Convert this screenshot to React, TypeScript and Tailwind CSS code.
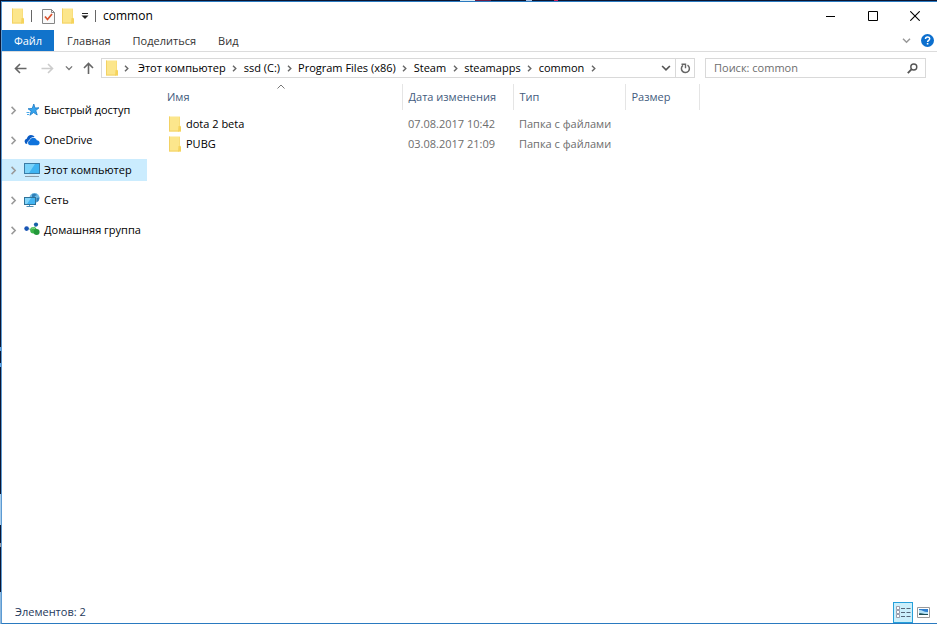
import React from "react";

const crumbs = ["Этот компьютер", "ssd (C:)", "Program Files (x86)", "Steam", "steamapps", "common"];

const files = [
  { name: "dota 2 beta", date: "07.08.2017 10:42", type: "Папка с файлами" },
  { name: "PUBG", date: "03.08.2017 21:09", type: "Папка с файлами" },
];

function Folder() {
  return (
    <svg width="14" height="16" viewBox="0 0 14 16" className="shrink-0" aria-hidden="true">
      <path d="M1 .5h11v9l1 1v5H1z" fill="#fce68c" />
      <path d="M1 .5h1v15H1zM1 14.500h10v1H1z" fill="#f3d264" />
      <path d="M10.500 10H12l1 1v4.500h-3z" fill="#f5d35c" />
      <path d="M11.200 1v9h.8V1z" fill="#f8dc77" />
    </svg>
  );
}

function Chevron({ size = 7, color = "#666", width = 1.4 }: { size?: number; color?: string; width?: number }) {
  return (
    <svg width={size} height={size} viewBox="0 0 7 7" className="shrink-0" aria-hidden="true">
      <path d="M2 .7 4.800 3.500 2 6.300" fill="none" stroke={color} strokeWidth={width} />
    </svg>
  );
}

function Down({ color, size = 9 }: { color: string; size?: number }) {
  return (
    <svg width={size} height={size} viewBox="0 0 9 9" aria-hidden="true">
      <path d="m1 2.700 3.500 3.500L8 2.700" fill="none" stroke={color} strokeWidth="1.500" />
    </svg>
  );
}

function StarIcon() {
  return (
    <svg width="16" height="16" viewBox="0 0 16 16" aria-hidden="true">
      <path d="m9.800 2 1.200 4 4-.2-3.200 2.700 1.400 4.500-3.600-2.500-3.700 2.800 1.300-4.300-3.200-2.200 4.200-.4z" fill="#36a4ee" stroke="#1979c4" strokeWidth=".8" />
      <path d="M2.500 10.500h3M3 12.500h2" stroke="#4aa8e8" />
    </svg>
  );
}

function CloudIcon() {
  return (
    <svg width="16" height="16" viewBox="0 0 16 16" aria-hidden="true">
      <path d="M3.200 12A2.600 2.600 0 0 1 .6 9.500c0-1.400.9-2.400 2.200-2.700C3.300 4.500 5 3 7 3c1.600 0 2.900.8 3.600 2-2.800-.3-4.800 1.200-5.200 3.300C3.800 8.700 3 10.500 3.200 12z" fill="#0a5bc4" />
      <path d="M6 13.300a2.400 2.400 0 0 1-.2-4.700C6.200 6.800 7.600 5.800 9.300 5.800c1.700 0 3 1 3.500 2.500 1.600 0 2.800 1.100 2.800 2.500 0 1.400-1 2.500-2.300 2.500z" fill="#0f73dc" />
    </svg>
  );
}

function ComputerIcon() {
  return (
    <svg width="16" height="16" viewBox="0 0 16 16" aria-hidden="true">
      <rect x=".5" y="1.500" width="15" height="10" fill="#3fb4f2" stroke="#3b7ca6" />
      <path d="M1 2h10L5 11H1z" fill="#78d2fa" />
      <path d="M1 14.500h14" stroke="#8b9ba6" />
      <path d="M5 13h6" stroke="#d2e2ea" />
    </svg>
  );
}

function NetworkIcon() {
  return (
    <svg width="16" height="16" viewBox="0 0 16 16" aria-hidden="true">
      <circle cx="10.500" cy="6" r="5" fill="#6db8e2" />
      <path d="M8 2.500c2-1.500 4-.5 5 .5l-2 1-1 2-2-1zM12.500 6l3-.5-1 3.500-2 1z" fill="#2f7fb8" />
      <rect x=".5" y="5.500" width="11" height="7" fill="#43b5f3" stroke="#2f7298" />
      <path d="M1 6h6l-4 6H1z" fill="#83d5fa" />
      <path d="M5.500 13v1.500M2.500 14.500h7" stroke="#4f8fb6" />
    </svg>
  );
}

function HomegroupIcon() {
  return (
    <svg width="16" height="16" viewBox="0 0 16 16" aria-hidden="true">
      <path d="M3 6.500 9 8l3-5" stroke="#7ac29b" fill="none" />
      <circle cx="2.600" cy="6.600" r="2.300" fill="#1a55b5" />
      <circle cx="12" cy="2.600" r="2.100" fill="#1661a8" />
      <circle cx="9.400" cy="8.200" r="3.200" fill="#3bb54a" />
      <circle cx="12.600" cy="10" r="3" fill="#23983a" />
      <path d="M7.500 7c1-1.200 2.500-1.200 3.500-.4" stroke="#9ee49a" fill="none" />
    </svg>
  );
}

const places = [
  { label: "Быстрый доступ", icon: <StarIcon />, active: false },
  { label: "OneDrive", icon: <CloudIcon />, active: false },
  { label: "Этот компьютер", icon: <ComputerIcon />, active: true },
  { label: "Сеть", icon: <NetworkIcon />, active: false },
  { label: "Домашняя группа", icon: <HomegroupIcon />, active: false },
];

function TitleBar() {
  return (
    <header className="flex h-7 shrink-0 items-center pl-[9px]">
      <Folder />
      <span className="ml-1.5 h-3 w-px bg-[#666]" />
      <button aria-label="Свойства" className="ml-2.5">
        <svg width="13" height="15" viewBox="0 0 13 15" aria-hidden="true">
          <path d="M.5.5h9l3 3v11H.5z" fill="#fafafa" stroke="#858585" />
          <path d="M9.500.5v3h3" fill="none" stroke="#858585" />
          <path d="m3 7.500 2.500 3L10 5" fill="none" stroke="#d9512c" strokeWidth="1.700" />
        </svg>
      </button>
      <button aria-label="Новая папка" className="ml-1.5"><Folder /></button>
      <button aria-label="Настройка панели" className="ml-1.5">
        <svg width="8" height="8" viewBox="0 0 8 8" aria-hidden="true">
          <path d="M1 1.500h6" stroke="#222" />
          <path d="M.5 3.500h7L4 7z" fill="#222" />
        </svg>
      </button>
      <span className="ml-1.5 h-3 w-px bg-[#666]" />
      <h1 className="ml-[7px] text-xs text-black">common</h1>
      <div className="mr-px ml-auto flex h-full">
        <button aria-label="Свернуть" className="grid w-[42px] place-items-center">
          <svg width="10" height="10" viewBox="0 0 10 10" aria-hidden="true"><path d="M0 5.500h9" stroke="#000" /></svg>
        </button>
        <button aria-label="Развернуть" className="grid w-[42px] place-items-center">
          <svg width="10" height="10" viewBox="0 0 10 10" aria-hidden="true"><path d="M.5.500h9v9h-9z" fill="none" stroke="#000" /></svg>
        </button>
        <button aria-label="Закрыть" className="grid w-[42px] place-items-center">
          <svg width="10" height="10" viewBox="0 0 10 10" aria-hidden="true"><path d="m.3.3 9.400 9.400M9.700.3.300 9.700" stroke="#000" strokeWidth="1.100" /></svg>
        </button>
      </div>
    </header>
  );
}

function Ribbon() {
  return (
    <nav className="flex h-[22px] shrink-0 items-stretch border-b border-[#dcdcdc] text-[11px] text-[#333]">
      <button className="w-[52px] bg-[#1173cb] pt-0.5 text-white">Файл</button>
      <div className="ml-[13px] flex gap-[22px] pt-0.5">
        <button>Главная</button>
        <button>Поделиться</button>
        <button>Вид</button>
      </div>
      <button aria-label="Развернуть ленту" className="mr-2.5 ml-auto"><Down color="#999" /></button>
      <button aria-label="Справка" className="mr-[3px]">
        <svg width="13" height="13" viewBox="0 0 13 13" aria-hidden="true">
          <circle cx="6.500" cy="6.500" r="6.500" fill="#0c6fce" />
          <path d="M4.500 5c0-2.800 4.200-2.700 4.200-.2C8.700 6.300 6.600 6.300 6.600 8" fill="none" stroke="#fff" strokeWidth="1.500" />
          <path d="M5.800 9h1.600v1.500H5.800z" fill="#fff" />
        </svg>
      </button>
    </nav>
  );
}

function Arrow({ color, dir }: { color: string; dir: "left" | "right" | "up" }) {
  const d = {
    left: "M12.500 6.500H1.500M6 2 1.500 6.500 6 11",
    right: "M.5 6.500h11M7 2l4.500 4.500L7 11",
    up: "M6.500 12V1.500M2 6l4.500-4.500L11 6",
  }[dir];
  return (
    <svg width="13" height="13" viewBox="0 0 13 13" aria-hidden="true">
      <path d={d} fill="none" stroke={color} strokeWidth="1.600" />
    </svg>
  );
}

function AddressBar() {
  return (
    <div className="flex shrink-0 items-center pt-1.5 pr-[11px] pl-3 text-[11px]">
      <button aria-label="Назад"><Arrow dir="left" color="#666" /></button>
      <button aria-label="Вперёд" className="ml-3.5"><Arrow dir="right" color="#ccc" /></button>
      <button aria-label="Последние расположения" className="ml-[11px]"><Down color="#777" size={8} /></button>
      <button aria-label="Вверх" className="ml-[9px]"><Arrow dir="up" color="#666" /></button>
      <div className="ml-1.5 flex h-5 min-w-0 flex-1 items-center border border-[#d9d9d9] pl-[3px]">
        <Folder />
        <ol className="flex items-center whitespace-nowrap text-black">
          <li className="flex w-[15px] justify-center"><Chevron /></li>
          {crumbs.map((c) => (
            <li key={c} className="flex items-center">
              <button className="pl-1">{c}</button>
              <span className="flex w-3.5 justify-center pl-1"><Chevron /></span>
            </li>
          ))}
        </ol>
        <button aria-label="Предыдущие расположения" className="mr-1 ml-auto"><Down color="#555" size={10} /></button>
        <button aria-label="Обновить" className="grid h-full w-[19px] place-items-center border-l border-[#d9d9d9]">
          <svg width="11" height="11" viewBox="0 0 11 11" aria-hidden="true">
            <path d="M7.500 2.200A4 4 0 1 1 3 2.400" fill="none" stroke="#666" strokeWidth="1.500" />
            <path d="M1.500 1.200h4v4" fill="none" stroke="#666" strokeWidth="1.400" />
          </svg>
        </button>
      </div>
      <label className="ml-2.5 flex h-5 w-[221px] items-center border border-[#d9d9d9] pr-[7px] pl-2">
        <input aria-label="Поиск" placeholder="Поиск: common" className="min-w-0 flex-1 bg-transparent outline-none placeholder:text-[#6d6d6d]" />
        <svg width="11" height="11" viewBox="0 0 11 11" aria-hidden="true">
          <circle cx="6.800" cy="4" r="3" fill="none" stroke="#555" strokeWidth="1.400" />
          <path d="M4.700 6.200.8 10.200" stroke="#555" strokeWidth="1.800" />
        </svg>
      </label>
    </div>
  );
}

function Sidebar() {
  return (
    <nav className="w-[145px] shrink-0 pt-[21px]">
      <ul className="flex flex-col gap-2">
        {places.map((p) => (
          <li key={p.label}>
            <a href="#" className={`flex h-[22px] items-center pl-[7px] text-[11px] whitespace-nowrap text-black ${p.active ? "bg-[#cbecfe]" : ""}`}>
              <Chevron size={9} color="#999" width={1.2} />
              <span className="mr-1 ml-1.5">{p.icon}</span>
              {p.label}
            </a>
          </li>
        ))}
      </ul>
    </nav>
  );
}

function FileTable() {
  return (
    <div className="ml-[13px] min-w-0 flex-1 pt-1.5">
      <table className="w-[539px] table-fixed border-collapse text-left text-[11px]">
        <colgroup>
          <col className="w-[242px]" />
          <col className="w-[111px]" />
          <col className="w-[112px]" />
          <col className="w-[74px]" />
        </colgroup>
        <thead>
          <tr className="h-[26px] text-[#435b7d]">
            <th className="relative border-r border-[#e5e5e5] pl-[7px] font-normal">
              Имя
              <svg width="9" height="6" viewBox="0 0 9 6" className="absolute top-0 left-1/2 -translate-x-1/2" aria-hidden="true">
                <path d="m1 4.500 3.500-3.500L8 4.500" fill="none" stroke="#777" />
              </svg>
            </th>
            <th className="border-r border-[#e5e5e5] pl-1.5 font-normal whitespace-nowrap">Дата изменения</th>
            <th className="border-r border-[#e5e5e5] pl-1.5 font-normal">Тип</th>
            <th className="border-r border-[#e5e5e5] pl-1.5 font-normal">Размер</th>
          </tr>
        </thead>
        <tbody className="text-[#6d6d6d]">
          <tr className="h-1"><td colSpan={4} className="p-0" /></tr>
          {files.map((f) => (
            <tr key={f.name} className="h-5">
              <td className="p-0 pl-2 text-black">
                <a href="#" className="flex items-center gap-1"><Folder />{f.name}</a>
              </td>
              <td className="p-0 pl-1.5 whitespace-nowrap">{f.date}</td>
              <td className="p-0 pl-1.5 whitespace-nowrap">{f.type}</td>
              <td />
            </tr>
          ))}
        </tbody>
      </table>
    </div>
  );
}

function StatusBar() {
  return (
    <footer className="flex h-[22px] shrink-0 items-center pr-[7px] pl-[13px] text-[11px] text-[#1e395b]">
      Элементов: 2
      <button aria-label="Таблица" className="ml-auto grid h-[21px] w-5 place-items-center border border-[#26a0da] bg-[#cbeffb]">
        <svg width="15" height="13" viewBox="0 0 15 13" aria-hidden="true">
          <path d="M.5.500h3v3h-3zM.5 4.500h3v3h-3zM.5 8.500h3v3h-3z" fill="#fff" stroke="#889" strokeWidth=".8" />
          <path d="M5 2.500h4M5 6.500h4M5 10.500h4M10.500 2.500h4M10.500 6.500h4M10.500 10.500h4" stroke="#567" />
        </svg>
      </button>
      <button aria-label="Крупные значки" className="ml-1">
        <svg width="13" height="11" viewBox="0 0 13 11" aria-hidden="true">
          <path d="M.5.500h12v10H.5z" fill="#fff" stroke="#999" />
          <path d="M2 2h9v6H2z" fill="#2f7fd0" />
          <path d="M2 3c3-.5 5 2.500 9 2v2H2z" fill="#b5e2f7" />
          <path d="M2 6.500c3-1 5 1 9 .5v1H2z" fill="#1d4d55" />
        </svg>
      </button>
    </footer>
  );
}

/* Slivers of the desktop that stay visible past the window's top and left edges. */
function DesktopTop() {
  return (
    <div className="flex h-px shrink-0 pl-[460px]">
      <span className="w-[15px] bg-[#dcecf5]" />
      <span className="w-4 bg-[#6b1d45]" />
      <span className="ml-[35px] w-1.5 bg-[#a9bfe0]" />
      <span className="ml-[22px] w-1 bg-[#d0225f]" />
    </div>
  );
}

function DesktopLeft() {
  return (
    <div className="flex w-px shrink-0 flex-col pt-[346px]">
      <span className="h-1 bg-[#5fa5e6]" />
      <span className="mt-3 h-1 bg-[#5fa5e6]" />
      <span className="mt-[127px] h-[31px] bg-[#a8cdec]" />
      <span className="mt-[18px] h-1 bg-[#9a9aa0]" />
      <span className="mt-[45px] flex-1 bg-[#8fb9de]" />
    </div>
  );
}

export default function App() {
  return (
    <div className="flex h-screen flex-col overflow-hidden bg-[#0b1430] font-['Open_Sans','Noto_Sans',sans-serif]">
      <DesktopTop />
      <div className="flex min-h-0 flex-1">
        <DesktopLeft />
        <div className="flex min-w-0 flex-1 flex-col border-t border-b border-l border-[#2a7ac0] border-l-[#5c9bd3] bg-white">
          <TitleBar />
          <Ribbon />
          <AddressBar />
          <main className="flex min-h-0 flex-1">
            <Sidebar />
            <FileTable />
          </main>
          <StatusBar />
        </div>
      </div>
    </div>
  );
}
